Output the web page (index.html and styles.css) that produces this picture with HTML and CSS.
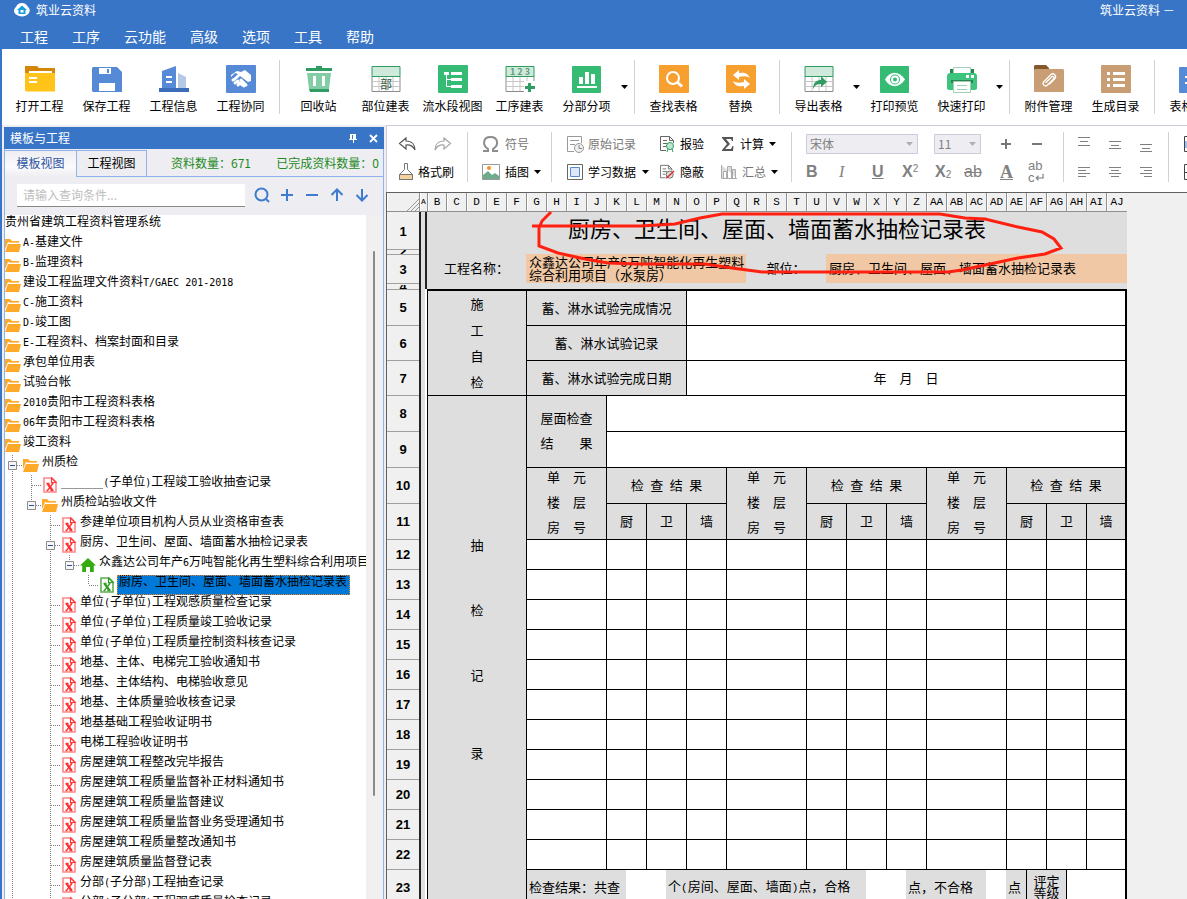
FILE: index.html
```html
<!DOCTYPE html>
<html lang="zh-CN">
<head>
<meta charset="utf-8">
<title>筑业云资料</title>
<link rel="stylesheet" href="styles.css">
</head>
<body>
<svg class="defs" aria-hidden="true">
  <symbol id="folder" viewBox="0 0 16 14"><path fill="#ffa928" d="M0 1h5l2 2h7v1H0z"/><path fill="#ffa928" d="M0 4h3l-3 7z"/><path fill="#ffc878" d="M4 4h10v1H4z"/><path fill="#ffa928" d="M3 6h13l-2 8H0z"/></symbol>
  <symbol id="doc" viewBox="0 0 14 16"><path fill="#fff" stroke="#fa8a8a" stroke-width="1.6" d="M1 1h8l4 4v10H1z"/><path fill="#fff" stroke="#ff3a3a" stroke-width="1.2" d="M8.500 1v4.500H13z"/><path stroke="#ff3030" stroke-width="2.200" d="M4.500 6.500l5 7"/><path stroke="#ff3030" stroke-width="1.300" d="M9.500 7l-5 6.500M3.500 6.500h3M8.500 6.500h2M3.500 13.500h2M7.500 13.500h3"/></symbol>
  <symbol id="docg" viewBox="0 0 14 16"><path fill="#fff" stroke="#5fae50" stroke-width="1.6" d="M1 1h8l4 4v10H1z"/><path fill="#fff" stroke="#2f9a20" stroke-width="1.2" d="M8.500 1v4.500H13z"/><path stroke="#2f9a20" stroke-width="2.200" d="M4.500 6.500l5 7"/><path stroke="#2f9a20" stroke-width="1.300" d="M9.500 7l-5 6.500M3.500 6.500h3M8.500 6.500h2M3.500 13.500h2M7.500 13.500h3"/></symbol>
  <symbol id="house" viewBox="0 0 16 16"><path fill="#35ab10" d="M8 1l8 7.500h-2.200V15H10v-5H6v5H2.200V8.500H0z"/></symbol>
  <symbol id="minus" viewBox="0 0 9 9"><path fill="#f6f6f6" stroke="#8c8c8c" d="M.5.5h8v8h-8z"/><path stroke="#2d4fa0" d="M2 4.500h5"/></symbol>
  <symbol id="caret" viewBox="0 0 7 4"><path fill="currentColor" d="M0 0h7L3.500 4z"/></symbol>
  <symbol id="sheet" viewBox="0 0 30 28"><path fill="#fff" stroke="#8a8a8a" d="M1 11.500V26.500H29V11.500"/><path stroke="#c6c6c6" fill="none" d="M1 16.500h28M1 21.500h28M8 12v14M15 12v14M22 12v14"/><path fill="#cfeadb" stroke="#2f9c62" d="M1 1.500h28v10H1z"/></symbol>
</svg>
<div class="app">
  <header class="titlebar">
    <svg class="logo" viewBox="0 0 16 14"><path fill="#fff" d="M8 0c3 0 5 2 6 4 3 2 2 7-2 8.500-3 1.500-7 1-9-.5C-.5 11-1 6 2 4 3 1.500 5 0 8 0z"/><path fill="#18a0e0" d="M8 2.500l5 4.500h-1.500v4h-7V7H3z"/><path fill="#fff" d="M6.500 7h3v2.500h-3z"/></svg>
    <span class="app-name">筑业云资料</span>
    <span class="doc-name">筑业云资料 －&emsp;贵州省</span>
  </header>
  <nav class="menu">
    <a href="#">工程</a><a href="#">工序</a><a href="#">云功能</a><a href="#">高级</a><a href="#">选项</a><a href="#">工具</a><a href="#">帮助</a>
  </nav>
  <div class="frame">
    <div class="tools">
      <button class="tool"><svg viewBox="0 0 30 28"><path fill="#d68606" d="M0 1h12l2 2h16v7H0z"/><path fill="#fff" d="M4 6h23v3H4z"/><path fill="#ffc31a" d="M0 8h30v18.500H1L0 25z"/><path fill="#fff" d="M4 12h8v2H4zM4 16h8v2H4z"/></svg>打开工程</button>
      <button class="tool"><svg viewBox="0 0 30 28"><path fill="#568ad6" d="M0 3l1-1h24l5 5v20H1l-1-1z"/><path fill="#fff" d="M7 3h12v6H7zM7 18h16v8H7z"/><path fill="#568ad6" d="M15 4h2v4h-2z"/></svg>保存工程</button>
      <button class="tool"><svg viewBox="0 0 30 28"><path fill="#568ad6" d="M3 6l14-5v23H3z"/><path fill="#b5c8e6" d="M19 8l8 4v12h-8z"/><path fill="#3a6cb8" d="M0 23h30v4H0z"/><path fill="#fff" d="M7 11h6v2H7zM7 16h6v2H7z"/></svg>工程信息</button>
      <button class="tool"><svg viewBox="0 0 30 28"><rect width="30" height="28" rx="1" fill="#568ad6"/><path fill="#fff" d="M5 10l6-4 4 1 4-2 6 5v6l-3 1-8-6-3 3-3-1 4-4-3-1-4 4z"/><path stroke="#fff" stroke-width="3" stroke-linecap="round" d="M7 15l2-1M9 18l3-2M12 20l2-2M15 15l5 5M15 19l3 2"/></svg>工程协同</button>
      <i class="sep"></i>
      <button class="tool"><svg viewBox="0 0 30 28"><path fill="#2f9c62" d="M2 3h10V1h6v2h10v3H2zM5 24h20v3H6z"/><path fill="#82cda5" d="M3 8h24l-2 16H5z"/><path fill="#fff" d="M9 11h3v10H9zM18 11h3v10h-3z"/></svg>回收站</button>
      <button class="tool"><svg viewBox="0 0 30 28"><use href="#sheet"/><text x="9" y="24" font-size="12" fill="#2d5c43">部</text></svg>部位建表</button>
      <button class="tool"><svg viewBox="0 0 30 28"><rect width="30" height="28" rx="1" fill="#36bb74"/><path fill="none" stroke="#fff" stroke-width="1" d="M8.500 9v12.500H14M8.500 14.500H14"/><path fill="#fff" d="M6 7h5v3H6zM13 7h11v3H13zM13 13h11v3H13zM13 20h11v3H13z"/></svg>流水段视图</button>
      <button class="tool"><svg viewBox="0 0 30 28"><use href="#sheet"/><text x="5" y="10" font-size="9" font-weight="bold" fill="#5f9b7b">1 2 3</text><path fill="#fff" d="M19 16h11v12H19z"/><path fill="#2f9c62" d="M23 18h3v3h4v3h-4v3h-3v-3h-3v-3h3z"/></svg>工序建表</button>
      <button class="tool"><svg viewBox="0 0 30 28"><rect y="1" x="0" width="29" height="27" rx="1" fill="#36bb74"/><path fill="#fff" d="M7 12h4v7H7zM13 7h4v12h-4zM19 9h4v10h-4zM5 21h20v2H5z"/></svg>分部分项</button>
      <button class="drop" aria-label="更多"><svg viewBox="0 0 7 4"><use href="#caret"/></svg></button>
      <i class="sep"></i>
      <button class="tool"><svg viewBox="0 0 30 28"><rect width="30" height="28" rx="1" fill="#f7a030"/><circle cx="14" cy="13" r="6" fill="none" stroke="#fff" stroke-width="2"/><path stroke="#fff" stroke-width="3" d="M18 17l5 4.500"/></svg>查找表格</button>
      <button class="tool"><svg viewBox="0 0 30 28"><rect width="30" height="28" rx="1" fill="#f7a030"/><path fill="#fff" d="M7 10l6-5v3c5-1 9 0 11 5-3-2-7-2-11-1v3zM24 19l-6 5v-3c-5 1-9 0-11-5 3 2 7 2 11 1v-3z"/></svg>替换</button>
      <i class="sep"></i>
      <button class="tool"><svg viewBox="0 0 30 28"><use href="#sheet"/><path fill="#2f9c62" d="M9 24c0-7 4-9 8-9v-4l6 6-6 5v-3c-4 0-6 1-8 5z"/></svg>导出表格</button>
      <button class="drop" aria-label="更多"><svg viewBox="0 0 7 4"><use href="#caret"/></svg></button>
      <button class="tool"><svg viewBox="0 0 30 28"><rect y="1" width="29" height="27" rx="1" fill="#36bb74"/><path fill="#fff" d="M5 14.500c5-9 14-9 20 0-6 9-15 9-20 0z"/><circle cx="15" cy="14.500" r="5" fill="#36bb74"/><circle cx="15" cy="14.500" r="3" fill="none" stroke="#fff" stroke-width="2"/></svg>打印预览</button>
      <button class="tool"><svg viewBox="0 0 30 28"><path fill="#27834f" d="M3 4h24v6H3z"/><path fill="#fff" stroke="#9fd0b5" d="M6.500 2.500h17v6h-17z"/><path fill="#3fc47d" d="M0 10l2-2h26l2 2v14l-2 1H2l-2-1z"/><path fill="#fff" d="M19 10h3v3h-3zM24 10h3v3h-3z"/><path fill="#27834f" d="M4 15h22v3H4z"/><path fill="#fff" stroke="#9fd0b5" d="M6.500 16.500h17v11h-17z"/><path stroke="#9fd0b5" d="M10 20.500h10M10 24.500h10"/></svg>快速打印</button>
      <button class="drop" aria-label="更多"><svg viewBox="0 0 7 4"><use href="#caret"/></svg></button>
      <i class="sep"></i>
      <button class="tool"><svg viewBox="0 0 30 28"><path fill="#85582c" d="M0 1l1-1h11l3 3v4H0z"/><path fill="#c99e74" d="M0 5l1-1h28l1 1v22H0z"/><path fill="none" stroke="#fff" stroke-width="1.300" stroke-linecap="round" d="M12 17.500l5.500-5.500c1.500-1.500 3.500.5 2 2l-6 6c-2.500 2.500-6-1-3.500-3.500l6.500-6.500c3-3 7 1 4 4l-5 5"/></svg>附件管理</button>
      <button class="tool"><svg viewBox="0 0 30 28"><rect width="30" height="28" rx="1" fill="#c99e74"/><path fill="#fff" d="M6 7h3v3H6zM12 7h12v3H12zM6 13h3v3H6zM12 13h12v3H12zM6 19h3v3H6zM12 19h12v3H12z"/></svg>生成目录</button>
      <i class="sep"></i>
      <button class="tool"><svg viewBox="0 0 30 28"><rect y="2" width="30" height="26" rx="1" fill="#568ad6"/><path stroke="#fff" stroke-width="2" d="M6 12h18M6 18h18"/></svg>表格管理</button>
    </div>

    <div class="work">
      <aside class="panel">
        <div class="panel-head"><span>模板与工程</span>
          <button aria-label="固定"><svg width="9" height="9" viewBox="0 0 9 9"><path fill="#fff" d="M1 0h6v5h1v1H5v3H4V6H0V5h1z"/><path fill="#3875c6" d="M3 1h1v4H3z"/></svg></button>
          <button aria-label="关闭"><svg width="9" height="9" viewBox="0 0 9 9"><path stroke="#fff" stroke-width="1.800" d="M1 1l7 7M8 1L1 8"/></svg></button>
        </div>
        <div class="panel-body">
          <div class="tabs">
            <button class="tab on">模板视图</button><button class="tab">工程视图</button>
            <div class="counts"><span>资料数量：671</span><span>已完成资料数量：0</span></div>
          </div>
          <div class="search">
            <input type="text" placeholder="请输入查询条件..." aria-label="查询条件">
            <button aria-label="查询"><svg viewBox="0 0 16 16"><circle cx="7.500" cy="7.500" r="6" /><path d="M12 12l3 3"/></svg></button>
            <button aria-label="展开"><svg viewBox="0 0 16 16"><path d="M2 8h12M8 2v12"/></svg></button>
            <button aria-label="收起"><svg viewBox="0 0 16 16"><path d="M2 8h12"/></svg></button>
            <button aria-label="上一个"><svg viewBox="0 0 16 16"><path d="M8 2v12M2.500 8L8 2.500 13.500 8"/></svg></button>
            <button aria-label="下一个"><svg viewBox="0 0 16 16"><path d="M8 2v12M2.500 8L8 13.500 13.500 8"/></svg></button>
          </div>
          <div class="tree-box">
            <ul class="tree">
              <li><span>贵州省建筑工程资料管理系统</span></li>
              <li><svg><use href="#folder"/></svg><span><b>A-</b>基建文件</span></li>
              <li><svg><use href="#folder"/></svg><span><b>B-</b>监理资料</span></li>
              <li><svg><use href="#folder"/></svg><span>建设工程监理文件资料<b>T/GAEC 201-2018</b></span></li>
              <li><svg><use href="#folder"/></svg><span><b>C-</b>施工资料</span></li>
              <li><svg><use href="#folder"/></svg><span><b>D-</b>竣工图</span></li>
              <li><svg><use href="#folder"/></svg><span><b>E-</b>工程资料、档案封面和目录</span></li>
              <li><svg><use href="#folder"/></svg><span>承包单位用表</span></li>
              <li><svg><use href="#folder"/></svg><span>试验台帐</span></li>
              <li><svg><use href="#folder"/></svg><span><b>2010</b>贵阳市工程资料表格</span></li>
              <li><svg><use href="#folder"/></svg><span><b>06</b>年贵阳市工程资料表格</span></li>
              <li><svg><use href="#folder"/></svg><span>竣工资料</span></li>
              <li><i class="t"><svg><use href="#minus"/></svg></i><svg><use href="#folder"/></svg><span>州质检</span></li>
              <li><i class="v"></i><i class="t"></i><svg><use href="#doc"/></svg><span><b>_______(</b>子单位<b>)</b>工程竣工验收抽查记录</span></li>
              <li><i class="v"></i><i class="end"><svg><use href="#minus"/></svg></i><svg><use href="#folder"/></svg><span>州质检站验收文件</span></li>
              <li><i class="v"></i><i></i><i class="t"></i><svg><use href="#doc"/></svg><span>参建单位项目机构人员从业资格审查表</span></li>
              <li><i class="v"></i><i></i><i class="t"><svg><use href="#minus"/></svg></i><svg><use href="#doc"/></svg><span>厨房、卫生间、屋面、墙面蓄水抽检记录表</span></li>
              <li><i class="v"></i><i></i><i class="v"></i><i class="end"><svg><use href="#minus"/></svg></i><svg><use href="#house"/></svg><span>众鑫达公司年产<b>6</b>万吨智能化再生塑料综合利用项目（水泵房）</span></li>
              <li><i class="v"></i><i></i><i class="v"></i><i></i><i class="end"></i><svg><use href="#docg"/></svg><span class="sel">厨房、卫生间、屋面、墙面蓄水抽检记录表</span></li>
              <li><i class="v"></i><i></i><i class="t"></i><svg><use href="#doc"/></svg><span>单位<b>(</b>子单位<b>)</b>工程观感质量检查记录</span></li>
              <li><i class="v"></i><i></i><i class="t"></i><svg><use href="#doc"/></svg><span>单位<b>(</b>子单位<b>)</b>工程质量竣工验收记录</span></li>
              <li><i class="v"></i><i></i><i class="t"></i><svg><use href="#doc"/></svg><span>单位<b>(</b>子单位<b>)</b>工程质量控制资料核查记录</span></li>
              <li><i class="v"></i><i></i><i class="t"></i><svg><use href="#doc"/></svg><span>地基、主体、电梯完工验收通知书</span></li>
              <li><i class="v"></i><i></i><i class="t"></i><svg><use href="#doc"/></svg><span>地基、主体结构、电梯验收意见</span></li>
              <li><i class="v"></i><i></i><i class="t"></i><svg><use href="#doc"/></svg><span>地基、主体质量验收核查记录</span></li>
              <li><i class="v"></i><i></i><i class="t"></i><svg><use href="#doc"/></svg><span>地基基础工程验收证明书</span></li>
              <li><i class="v"></i><i></i><i class="t"></i><svg><use href="#doc"/></svg><span>电梯工程验收证明书</span></li>
              <li><i class="v"></i><i></i><i class="t"></i><svg><use href="#doc"/></svg><span>房屋建筑工程整改完毕报告</span></li>
              <li><i class="v"></i><i></i><i class="t"></i><svg><use href="#doc"/></svg><span>房屋建筑工程质量监督补正材料通知书</span></li>
              <li><i class="v"></i><i></i><i class="t"></i><svg><use href="#doc"/></svg><span>房屋建筑工程质量监督建议</span></li>
              <li><i class="v"></i><i></i><i class="t"></i><svg><use href="#doc"/></svg><span>房屋建筑工程质量监督业务受理通知书</span></li>
              <li><i class="v"></i><i></i><i class="t"></i><svg><use href="#doc"/></svg><span>房屋建筑工程质量整改通知书</span></li>
              <li><i class="v"></i><i></i><i class="t"></i><svg><use href="#doc"/></svg><span>房屋建筑质量监督登记表</span></li>
              <li><i class="v"></i><i></i><i class="t"></i><svg><use href="#doc"/></svg><span>分部<b>(</b>子分部<b>)</b>工程抽查记录</span></li>
              <li><i class="v"></i><i></i><i class="t"></i><svg><use href="#doc"/></svg><span>分部<b>(</b>子分部<b>)</b>工程观感质量检查记录</span></li>
            </ul>
            <div class="scroll"><div class="thumb"></div></div>
          </div>
        </div>
      </aside>

      <main class="editor">
        <div class="ribbon">
          <div class="grp g1">
            <div class="line">
              <button aria-label="撤销"><svg width="18" height="18" viewBox="0 0 18 18"><path fill="none" stroke="#555" stroke-width="1.200" d="M8 3L1.500 8.500 8 14v-4c4-.5 7 1 9 5 0-5-3-9-9-9z"/></svg></button>
              <button aria-label="重做" class="redo"><svg width="18" height="18" viewBox="0 0 18 18"><path fill="none" stroke="#a5a5a5" stroke-width="1.200" d="M10 3l6.500 5.500L10 14v-4c-4-.5-7 1-9 5 0-5 3-9 9-9z"/></svg></button>
            </div>
            <div class="line"><button class="brush"><svg width="16" height="18" viewBox="0 0 16 18"><path fill="#fff" stroke="#777" d="M6.500 .5h3v6l5 5v5h-13v-5l5-5z"/><path fill="#f5d29d" stroke="#777" d="M1.500 11.500h13v5h-13z"/></svg>格式刷</button></div>
          </div>
          <i class="sep"></i>
          <div class="grp g2">
            <div class="line"><button class="dim"><svg width="18" height="18" viewBox="0 0 18 18"><path fill="none" stroke="#8c8c8c" stroke-width="2" d="M1 16h5v-2C0 10 1 2 8.500 2s9 8 2.500 12v2h5"/></svg>符号</button></div>
            <div class="line"><button><svg width="18" height="18" viewBox="0 0 18 18"><path fill="#fff" stroke="#999" d="M.5 1.500h17v15H.5z"/><path fill="#6fac8b" d="M1 12l5-4 4 4 3-2 4 3v3H1z"/><circle cx="7" cy="5" r="2" fill="#f7901e"/></svg>插图</button><svg class="car" viewBox="0 0 7 4"><use href="#caret"/></svg></div>
          </div>
          <i class="sep"></i>
          <div class="grp g3">
            <div class="line">
              <button class="dim w1"><svg width="17" height="18" viewBox="0 0 17 18"><path fill="#fff" stroke="#999" d="M7 16.500H.5v-15h14V8M3 5.500h9M3 9.500h5"/><circle cx="12" cy="13" r="4.500" fill="#eee" stroke="#999"/><path fill="none" stroke="#888" d="M12 10v3.500h3"/></svg>原始记录</button>
              <button class="w2"><svg width="15" height="18" viewBox="0 0 15 18"><path fill="#fff" stroke="#666" d="M6 15.500H.5v-14h9l4 4V8M9.500 1.500v4h4M3 5.500h4M3 8.500h5M3 11.500h3"/><circle cx="10" cy="11" r="3.500" fill="#bfe8d0" stroke="#2f9c62"/><path stroke="#2f9c62" d="M8 14l-1 3M12 14l1 3"/></svg>报验</button>
              <button class="w3"><svg width="14" height="18" viewBox="0 0 14 18"><path fill="#555" d="M1 2h11v4h-1l-1-2H5l4 5-5 5h6l1.500-3h1l-.5 5H1v-1l5-6-5-6z"/></svg>计算</button><svg class="car" viewBox="0 0 7 4"><use href="#caret"/></svg>
            </div>
            <div class="line">
              <button class="w1"><svg width="17" height="18" viewBox="0 0 17 18"><path fill="#fff" stroke="#666" d="M.5 1.500h15v15H.5z"/><path fill="#dce8f8" stroke="#5b88c8" d="M3.500 4.500h9v9h-9z"/></svg>学习数据<svg class="car" viewBox="0 0 7 4"><use href="#caret"/></svg></button>
              <button class="w2"><svg width="15" height="18" viewBox="0 0 17 18"><path fill="#fff" stroke="#666" d="M6 15.500H.5v-14h9l4 4V8M9.500 1.500v4h4M3 5.500h4M3 8.500h5M3 11.500h3"/><circle cx="11" cy="12" r="4" fill="#ddd" stroke="#666"/><path stroke="#d22" stroke-width="1.500" d="M7 16l9-8"/></svg>隐蔽</button>
              <button class="dim w3"><svg width="16" height="18" viewBox="0 0 16 18"><path fill="#ddd" stroke="#aaa" d="M.5 2v13.500H16M2.500 8.500h3v7h-3zM6.500 3.500h4v12h-4zM11.500 6.500h3v9h-3z"/></svg>汇总</button><svg class="car" viewBox="0 0 7 4"><use href="#caret"/></svg>
            </div>
          </div>
          <i class="sep"></i>
          <div class="grp g4">
            <div class="line">
              <span class="pick font"><select disabled aria-label="字体"><option>宋体</option></select><svg class="arrow" viewBox="0 0 7 4"><use href="#caret"/></svg></span>
              <span class="pick size"><select disabled aria-label="字号"><option>11</option></select><svg class="arrow" viewBox="0 0 7 4"><use href="#caret"/></svg></span>
              <button aria-label="增大"><svg width="12" height="12" viewBox="0 0 12 12"><path stroke="#777" stroke-width="2" d="M1 6h10M6 1v10"/></svg></button>
              <button class="dec" aria-label="减小"><svg width="12" height="12" viewBox="0 0 12 12"><path stroke="#777" stroke-width="2" d="M1 6h10"/></svg></button>
            </div>
            <div class="line fmt">
              <button class="bold">B</button><button class="ital">I</button><button class="undl">U</button><button class="bold">X<sup>2</sup></button><button class="bold">X<sub>2</sub></button><button class="strk">ab</button><button class="fcol">A</button><button class="wrap"><span>ab</span><span>c↵</span></button>
            </div>
          </div>
          <i class="sep"></i>
          <div class="grp g5">
            <div class="line">
              <button aria-label="顶端对齐"><svg viewBox="0 0 12 16"><path d="M0 1.500h12M2 5.500h8M0 9.500h12"/></svg></button>
              <button aria-label="垂直居中"><svg viewBox="0 0 12 16"><path d="M0 5.500h12M2 9.500h8M0 12.500h12"/></svg></button>
              <button aria-label="底端对齐"><svg viewBox="0 0 12 16"><path d="M0 8.500h12M2 12.500h8M0 15.500h12"/></svg></button>
            </div>
            <div class="line">
              <button aria-label="左对齐"><svg viewBox="0 0 12 16"><path d="M0 3.500h12M0 6.500h8M0 9.500h12M0 12.500h8"/></svg></button>
              <button aria-label="居中"><svg viewBox="0 0 12 16"><path d="M0 3.500h12M2 6.500h8M0 9.500h12M2 12.500h8"/></svg></button>
              <button aria-label="右对齐"><svg viewBox="0 0 12 16"><path d="M0 3.500h12M4 6.500h8M0 9.500h12M4 12.500h8"/></svg></button>
            </div>
          </div>
          <i class="sep"></i>
          <div class="grp g6">
            <div class="line"><button aria-label="合并单元格"><svg width="18" height="18" viewBox="0 0 18 18"><path fill="#fff" stroke="#444" d="M.5 1.500h17v15H.5z"/><path fill="#a9bff0" d="M1 6h16v7H1z"/></svg></button></div>
            <div class="line"><button aria-label="拆分单元格"><svg width="18" height="18" viewBox="0 0 18 18"><path fill="#fff" stroke="#444" d="M.5 1.500h17v15H.5zM0 9.500h18"/></svg></button></div>
          </div>
        </div>

        <div class="sheet">
          <table>
            <colgroup><col class="c-num"><col class="c-a"><col class="c-b"><col class="c" span="33"><col class="c-end"></colgroup>
            <thead><tr><th class="corner"><svg width="12" height="12" viewBox="0 0 12 12"><path stroke="#999" d="M0 12L12 0M4 12l8-8M8 12l4-4"/></svg></th><th class="ca">A</th><th>B</th><th>C</th><th>D</th><th>E</th><th>F</th><th>G</th><th>H</th><th>I</th><th>J</th><th>K</th><th>L</th><th>M</th><th>N</th><th>O</th><th>P</th><th>Q</th><th>R</th><th>S</th><th>T</th><th>U</th><th>V</th><th>W</th><th>X</th><th>Y</th><th>Z</th><th>AA</th><th>AB</th><th>AC</th><th>AD</th><th>AE</th><th>AF</th><th>AG</th><th>AH</th><th>AI</th><th>AJ</th></tr></thead>
            <tbody class="top">
              <tr class="r1"><th>1</th><td class="a" rowspan="4"></td><td colspan="35" class="title">厨房、卫生间、屋面、墙面蓄水抽检记录表</td></tr>
              <tr class="r2"><th><div>2</div></th><td colspan="35"></td></tr>
              <tr class="r3"><th>3</th><td colspan="5">工程名称：</td><td colspan="11" class="fill">众鑫达公司年产6万吨智能化再生塑料综合利用项目（水泵房）</td><td colspan="4">部位：</td><td colspan="15" class="fill">厨房、卫生间、屋面、墙面蓄水抽检记录表</td></tr>
              <tr class="r4"><th><div>4</div></th><td colspan="35"></td></tr>
            </tbody>
            <tbody class="form">
              <tr class="r5"><th>5</th><td class="a" rowspan="19"></td><td colspan="5" rowspan="3" class="g side">施<br>工<br>自<br>检</td><td colspan="8" class="g">蓄、淋水试验完成情况</td><td colspan="22"></td></tr>
              <tr class="h35"><th>6</th><td colspan="8" class="g">蓄、淋水试验记录</td><td colspan="22"></td></tr>
              <tr class="h35"><th>7</th><td colspan="8" class="g">蓄、淋水试验完成日期</td><td colspan="22">年&emsp;月&emsp;日</td></tr>
              <tr class="h36"><th>8</th><td colspan="5" rowspan="16" class="g long"><div><span>抽</span><span>检</span><span>记</span><span>录</span></div></td><td colspan="4" rowspan="2" class="g two">屋面检查<br>结&emsp;&emsp;果</td><td colspan="26"></td></tr>
              <tr class="h36"><th>9</th><td colspan="26"></td></tr>
              <tr class="h36"><th>10</th><td colspan="4" rowspan="2" class="g"><div class="stack">单&emsp;元<br>楼&emsp;层<br>房&emsp;号</div></td><td colspan="6" class="g">检&ensp;查&ensp;结&ensp;果</td><td colspan="4" rowspan="2" class="g"><div class="stack">单&emsp;元<br>楼&emsp;层<br>房&emsp;号</div></td><td colspan="6" class="g">检&ensp;查&ensp;结&ensp;果</td><td colspan="4" rowspan="2" class="g"><div class="stack">单&emsp;元<br>楼&emsp;层<br>房&emsp;号</div></td><td colspan="6" class="g">检&ensp;查&ensp;结&ensp;果</td></tr>
              <tr class="h36"><th>11</th><td colspan="2" class="g">厨</td><td colspan="2" class="g">卫</td><td colspan="2" class="g">墙</td><td colspan="2" class="g">厨</td><td colspan="2" class="g">卫</td><td colspan="2" class="g">墙</td><td colspan="2" class="g">厨</td><td colspan="2" class="g">卫</td><td colspan="2" class="g">墙</td></tr>
              <tr><th>12</th><td colspan="4"></td><td colspan="2"></td><td colspan="2"></td><td colspan="2"></td><td colspan="4"></td><td colspan="2"></td><td colspan="2"></td><td colspan="2"></td><td colspan="4"></td><td colspan="2"></td><td colspan="2"></td><td colspan="2"></td></tr>
              <tr><th>13</th><td colspan="4"></td><td colspan="2"></td><td colspan="2"></td><td colspan="2"></td><td colspan="4"></td><td colspan="2"></td><td colspan="2"></td><td colspan="2"></td><td colspan="4"></td><td colspan="2"></td><td colspan="2"></td><td colspan="2"></td></tr>
              <tr><th>14</th><td colspan="4"></td><td colspan="2"></td><td colspan="2"></td><td colspan="2"></td><td colspan="4"></td><td colspan="2"></td><td colspan="2"></td><td colspan="2"></td><td colspan="4"></td><td colspan="2"></td><td colspan="2"></td><td colspan="2"></td></tr>
              <tr><th>15</th><td colspan="4"></td><td colspan="2"></td><td colspan="2"></td><td colspan="2"></td><td colspan="4"></td><td colspan="2"></td><td colspan="2"></td><td colspan="2"></td><td colspan="4"></td><td colspan="2"></td><td colspan="2"></td><td colspan="2"></td></tr>
              <tr><th>16</th><td colspan="4"></td><td colspan="2"></td><td colspan="2"></td><td colspan="2"></td><td colspan="4"></td><td colspan="2"></td><td colspan="2"></td><td colspan="2"></td><td colspan="4"></td><td colspan="2"></td><td colspan="2"></td><td colspan="2"></td></tr>
              <tr><th>17</th><td colspan="4"></td><td colspan="2"></td><td colspan="2"></td><td colspan="2"></td><td colspan="4"></td><td colspan="2"></td><td colspan="2"></td><td colspan="2"></td><td colspan="4"></td><td colspan="2"></td><td colspan="2"></td><td colspan="2"></td></tr>
              <tr><th>18</th><td colspan="4"></td><td colspan="2"></td><td colspan="2"></td><td colspan="2"></td><td colspan="4"></td><td colspan="2"></td><td colspan="2"></td><td colspan="2"></td><td colspan="4"></td><td colspan="2"></td><td colspan="2"></td><td colspan="2"></td></tr>
              <tr><th>19</th><td colspan="4"></td><td colspan="2"></td><td colspan="2"></td><td colspan="2"></td><td colspan="4"></td><td colspan="2"></td><td colspan="2"></td><td colspan="2"></td><td colspan="4"></td><td colspan="2"></td><td colspan="2"></td><td colspan="2"></td></tr>
              <tr><th>20</th><td colspan="4"></td><td colspan="2"></td><td colspan="2"></td><td colspan="2"></td><td colspan="4"></td><td colspan="2"></td><td colspan="2"></td><td colspan="2"></td><td colspan="4"></td><td colspan="2"></td><td colspan="2"></td><td colspan="2"></td></tr>
              <tr><th>21</th><td colspan="4"></td><td colspan="2"></td><td colspan="2"></td><td colspan="2"></td><td colspan="4"></td><td colspan="2"></td><td colspan="2"></td><td colspan="2"></td><td colspan="4"></td><td colspan="2"></td><td colspan="2"></td><td colspan="2"></td></tr>
              <tr><th>22</th><td colspan="4"></td><td colspan="2"></td><td colspan="2"></td><td colspan="2"></td><td colspan="4"></td><td colspan="2"></td><td colspan="2"></td><td colspan="2"></td><td colspan="4"></td><td colspan="2"></td><td colspan="2"></td><td colspan="2"></td></tr>
              <tr class="r23"><th>23</th><td colspan="5" class="g edge">检查结果：共查</td><td colspan="2"></td><td colspan="10" class="g">个<b>(</b>房间、屋面、墙面<b>)</b>点，合格</td><td colspan="2"></td><td colspan="4" class="g">点，不合格</td><td></td><td class="g">点</td><td colspan="2" class="g edge grade">评定<br>等级</td><td colspan="3" class="edge"></td></tr>
            </tbody>
          </table>
          <svg class="ink" viewBox="386 192 741 98"><path d="M551 212L542 221L539 228V246L558 253L585 259L608 263L638 264H705L732 268L762 272H948L962 270L990 264L1018 258L1045 254L1061 248L1054 239L1042 232L1018 227L985 219L965 218L940 214H722L700 218L675 224L640 226H532"/></svg>
        </div>
      </main>
    </div>
  </div>
</div>
</body>
</html>
```
FILE: styles.css
```css
* { box-sizing: border-box; }
body { margin: 0; overflow: hidden; font: 12px/16px "Noto Sans CJK SC", sans-serif; color: #000; }
button { font: inherit; color: inherit; background: none; border: 0; padding: 0; margin: 0; white-space: nowrap; }
i { font-style: normal; }
svg { display: block; flex: none; }
.defs { position: absolute; width: 0; height: 0; }

.app { display: flex; flex-direction: column; height: 100vh; overflow: hidden; background: #3875c6; }
.titlebar { display: flex; align-items: center; flex: none; height: 22px; padding: 0 0 2px 14px; gap: 6px; color: #fff; overflow: hidden; }
.logo { width: 16px; height: 14px; }
.doc-name { margin-left: auto; flex: none; width: 87px; overflow: hidden; white-space: nowrap; }
.menu { display: flex; flex: none; align-items: center; gap: 24px; height: 27px; padding: 1px 20px 0; font-size: 14px; }
.menu a { color: #fff; text-decoration: none; white-space: nowrap; }

.frame { flex: 1; min-height: 0; display: flex; flex-direction: column; margin-left: 2px; background: #eeeef2; }
.sep { flex: none; width: 1px; background: #d2d2d2; }

.tools { flex: none; display: flex; height: 76px; padding: 11px 0 0 4px; background: #fff; overflow: hidden; }
.tools .sep { height: 54px; margin: 0 5px; }
.tool { flex: none; width: 67px; display: flex; flex-direction: column; align-items: center; padding-top: 5px; gap: 5px; height: 60px; }
.tool svg { width: 30px; height: 28px; }
.drop { flex: none; width: 9px; height: 54px; display: flex; align-items: center; justify-content: center; }
.drop svg { width: 7px; height: 4px; }

.work { flex: 1; min-height: 0; display: flex; gap: 2px; }
.panel { flex: none; width: 380px; margin: 2px 0 0 2px; display: flex; flex-direction: column; }
.panel-head { flex: none; display: flex; align-items: center; gap: 11px; height: 22px; padding: 0 6px; background: #3875c6; color: #fff; }
.panel-head span { flex: 1; }
.panel-body { flex: 1; min-height: 0; display: flex; flex-direction: column; border: solid #8fb3ec; border-width: 0 1px; }
.tabs { flex: none; display: flex; height: 28px; padding-top: 1px; }
.tab { width: 70px; padding-bottom: 2px; border: solid #8fb3ec; border-width: 1px 1px 1px 0; }
.tab.on { width: 72px; color: #2c52a0; border-bottom: 0; background: linear-gradient(#eeeef2, #fbfbfd 60%, #eeeef2); }
.counts { flex: 1; display: flex; justify-content: space-between; padding: 5px 4px 0 24px; color: #1d8a1d; border-bottom: 1px solid #8fb3ec; white-space: nowrap; }
.search { flex: none; display: flex; align-items: center; gap: 9px; height: 38px; padding: 0 13px 2px 12px; }
.search input { flex: 1; min-width: 0; height: 23px; padding: 0 6px; border: 0; border-bottom: 1px solid #888; background: #fff; font: inherit; }
.search input::placeholder { color: #bebebe; opacity: 1; }
.search svg { width: 16px; height: 16px; fill: none; stroke: #3f7cd0; stroke-width: 2; }
.tree-box { flex: 1; min-height: 0; display: flex; background: #fff; }
.tree { flex: 1; min-width: 0; margin: 0; padding: 0; list-style: none; overflow: hidden; }
.tree li { display: flex; align-items: center; height: 20px; }
.tree li > svg { width: 16px; height: 16px; margin-right: 3px; }
.tree li > svg:first-child { margin-right: 2px; }
.tree span { align-self: stretch; flex: none; line-height: 12px; white-space: nowrap; }
.tree b { font: 10px/12px "DejaVu Sans Mono", monospace; }
.tree .sel { background: #0078d7; outline: 1px dotted #f08020; outline-offset: -1px; padding: 0 3px 0 2px; margin-left: -1px; }
.tree i { flex: none; width: 19px; height: 20px; display: flex; align-items: center; justify-content: flex-end; padding-right: 6px; background-repeat: no-repeat; }
.tree i:first-child { width: 18px; }
.tree i svg { width: 9px; height: 9px; }
.tree .v { background-image: repeating-linear-gradient(#808080 0 1px, transparent 1px 2px); background-size: 1px 100%; background-position: right 10px top; }
.tree .t, .tree .end { background-image: repeating-linear-gradient(#808080 0 1px, transparent 1px 2px), repeating-linear-gradient(90deg, #808080 0 1px, transparent 1px 2px); background-position: right 10px top, right center; }
.tree .t { background-size: 1px 100%, 10px 1px; }
.tree .end { background-size: 1px 50%, 10px 1px; }
.scroll { flex: none; width: 17px; padding: 36px 8px 103px 7px; background: #f0f0f0; }
.thumb { height: 100%; background: #8a8a8a; border-radius: 1px; }

.editor { flex: 1; min-width: 0; display: flex; flex-direction: column; }
.ribbon { flex: none; display: flex; height: 67px; padding-top: 6px; background: #fff; border: solid #ccccdc; border-width: 1px 0 0 1px; overflow: hidden; }
.ribbon .sep { height: 50px; }
.grp { flex: none; display: flex; flex-direction: column; }
.line { display: flex; align-items: center; height: 28px; padding-bottom: 4px; }
.line button { display: flex; align-items: center; flex: none; gap: 5px; }
.line .brush { gap: 4px; }
.dim { color: #777; }
.car { width: 7px; height: 4px; margin-left: 5px; }
.g1 { width: 80px; padding-left: 11px; }
.redo { margin-left: 18px; }
.g2 { width: 83px; padding-left: 14px; }
.g3 { width: 239px; padding-left: 15px; }
.line .w1 { width: 93px; gap: 4px; }
.w1 .car { margin-left: 2px; }
.w2 { width: 61px; }
.g4 { width: 271px; padding-left: 14px; }
.g4 .line { color: #808080; }
.pick { position: relative; flex: none; height: 20px; margin-right: 16px; }
.pick select { appearance: none; width: 100%; height: 20px; padding: 0 3px; border: 1px solid #ccccdc; border-radius: 0; background: #eeeef2; color: #808080; font: inherit; font-size: 12px; opacity: 1; }
.pick .arrow { position: absolute; right: 5px; top: 8px; width: 7px; height: 4px; color: #b0b0b0; }
.font { width: 112px; }
.size { width: 47px; margin-right: 19px; }
.dec { margin-left: 19px; }
.fmt { font: 16px/16px "Liberation Sans", sans-serif; gap: 0; }
.line.fmt button { width: 33px; gap: 0; line-height: 16px; }
.line.fmt .undl { text-decoration: underline; font-weight: bold; width: 30px; }
.line.fmt .strk { text-decoration: line-through; width: 36px; margin-left: -4px; }
.line.fmt .fcol { font-family: "Liberation Serif", serif; font-size: 18px; text-decoration: underline; font-weight: bold; width: 28px; }
.line.fmt .wrap { flex-direction: column; align-items: flex-start; font-size: 13px; line-height: 12px; }
.fmt .bold { font-weight: bold; }
.fmt .ital { font-family: "Liberation Serif", serif; font-style: italic; }
.fmt sup, .fmt sub { font-size: 10px; line-height: 10px; font-weight: normal; vertical-align: baseline; }
.fmt sup { align-self: flex-start; }
.fmt sub { align-self: flex-end; }
.g5 { width: 104px; padding-left: 14px; }
.g5 .line { gap: 19px; }
.g5 svg { width: 12px; height: 16px; stroke: #808080; }
.g6 { padding-left: 15px; }

.sheet { flex: 1; min-height: 0; position: relative; overflow: hidden; background: #f0f0f0; border-top: 1px solid #606060; border-left: 1px solid #606060; }
.sheet table { table-layout: fixed; width: 740px; border-spacing: 0; font-size: 13px; line-height: 13px; text-align: center; }
.c-num { width: 32px; } .c-a { width: 8px; } .c-b { width: 19px; } .c { width: 20px; } .c-end { width: 21px; }
.sheet th, .sheet td { padding: 0 0 2px; overflow: hidden; }
.sheet thead th { height: 19px; padding: 0; border: solid #909090; border-width: 0 0 1px 1px; background: #f0f0f0; box-shadow: inset 1px 0 #fff; font: 11px/12px "Liberation Mono", monospace; color: #000; }
.sheet thead .corner { border-left: 0; vertical-align: bottom; }
.corner svg { margin-left: auto; }
.sheet thead .ca { font-size: 8px; }
.sheet tbody th { padding: 0; background: #f0f0f0; border-top: 1px solid #a0a0a0; font: bold 13px/13px "Liberation Sans", sans-serif; }
.sheet tbody.top tr:first-child th { border-top-color: #f0f0f0; }
.a { border-left: 2px solid #222; border-right: 2px solid #222; background: #dedede; }
.top td { background: #dedede; }
.top th div { height: 4px; line-height: 4px; overflow: hidden; }
.r1 { height: 37px; } .r2 { height: 5px; } .r3 { height: 29px; } .r4 { height: 6px; }
.sheet .title { font-size: 22px; line-height: 24px; padding-bottom: 8px; }
.top .r2 td, .top .r4 td { padding: 0; }
.top .fill { background: #f0c8a5; text-align: left; padding-left: 3px; }
.form tr { height: 30px; }
.form .r5 { height: 36px; }
.form .h35 { height: 35px; }
.form .h36, .form .r23 { height: 36px; }
.form td { background: #fff; border-top: 1px solid #000; border-left: 1px solid #000; }
.form .r5 td { border-top-width: 2px; }
.form td:last-child { border-right: 2px solid #000; }
.form td.g { background: #dedede; }
.form td.a { border-top: 0; border-left: 2px solid #222; border-right: 2px solid #fff; background: #dedede; }
.form .side { line-height: 26px; padding: 0; }
.form .two { line-height: 25px; padding-bottom: 4px; }
.stack { line-height: 25px; margin: -4px 0 -2px; }
.long { vertical-align: top; }
.long div { display: flex; flex-direction: column; gap: 39px; padding-top: 136px; line-height: 26px; }
.long span:last-child { padding-top: 13px; }
.form .r23 td { text-align: left; padding-left: 2px; white-space: nowrap; }
.form .r23 td:not(.edge) { border-left: 0; }
.form .r23 b { font: 11px/13px "Liberation Mono", monospace; }
.form .r23 .grade { text-align: center; padding: 5px 0 0; line-height: 12px; vertical-align: top; }
.ink { position: absolute; left: -1px; top: -1px; width: 741px; height: 98px; fill: none; stroke: #ff2010; stroke-width: 3; }
```
